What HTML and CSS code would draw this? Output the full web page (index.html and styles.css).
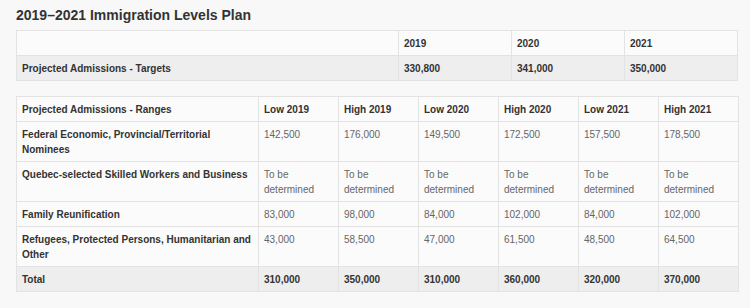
FILE: index.html
```html
<!DOCTYPE html>
<html>
<head>
<meta charset="utf-8">
<link rel="stylesheet" href="styles.css">
</head>
<body>
<h2 class="title">2019–2021 Immigration Levels Plan</h2>
<table class="grid targets">
  <colgroup><col class="c-label1"><col class="c-year"><col class="c-year"><col class="c-year"></colgroup>
  <tr class="head"><th></th><th>2019</th><th>2020</th><th>2021</th></tr>
  <tr class="shade"><th>Projected Admissions - Targets</th><th>330,800</th><th>341,000</th><th>350,000</th></tr>
</table>
<table class="grid ranges">
  <colgroup><col class="c-label2"><col class="c-num"><col class="c-num"><col class="c-num"><col class="c-num"><col class="c-num"><col class="c-num"></colgroup>
  <tr class="head"><th>Projected Admissions - Ranges</th><th>Low 2019</th><th>High 2019</th><th>Low 2020</th><th>High 2020</th><th>Low 2021</th><th>High 2021</th></tr>
  <tr><th>Federal Economic, Provincial/Territorial Nominees</th><td>142,500</td><td>176,000</td><td>149,500</td><td>172,500</td><td>157,500</td><td>178,500</td></tr>
  <tr><th>Quebec-selected Skilled Workers and Business</th><td>To be determined</td><td>To be determined</td><td>To be determined</td><td>To be determined</td><td>To be determined</td><td>To be determined</td></tr>
  <tr><th>Family Reunification</th><td>83,000</td><td>98,000</td><td>84,000</td><td>102,000</td><td>84,000</td><td>102,000</td></tr>
  <tr><th>Refugees, Protected Persons, Humanitarian and Other</th><td>43,000</td><td>58,500</td><td>47,000</td><td>61,500</td><td>48,500</td><td>64,500</td></tr>
  <tr class="shade"><th>Total</th><th>310,000</th><th>350,000</th><th>310,000</th><th>360,000</th><th>320,000</th><th>370,000</th></tr>
</table>
</body>
</html>
```
FILE: styles.css
```css
html, body {
  margin: 0;
  background: #f8f8f8;
}
body {
  padding: 6px 14px 0 16px;
  font-family: "Liberation Sans", Arial, sans-serif;
  color: #333;
}
.title {
  margin: 0 0 6px 0;
  font-size: 14px;
  line-height: 18px;
  font-weight: bold;
  color: #333;
}
.grid {
  border-collapse: collapse;
  table-layout: fixed;
  width: 720px;
  background: #fbfbfb;
  font-size: 10px;
  line-height: 15px;
}
.grid th, .grid td {
  border: 1px solid #e3e3e3;
  padding: 5px 5px 4px 5px;
  text-align: left;
  vertical-align: top;
}
.grid th {
  font-weight: bold;
  color: #333;
}
.grid td {
  color: #666;
}
.grid .shade th, .grid .shade td {
  background: #eeeeee;
}
.targets {
  margin-bottom: 15px;
}
.c-label1 { width: 382px; }
.c-year { width: 113px; }
.c-label2 { width: 242px; }
.c-num { width: 80px; }
```
